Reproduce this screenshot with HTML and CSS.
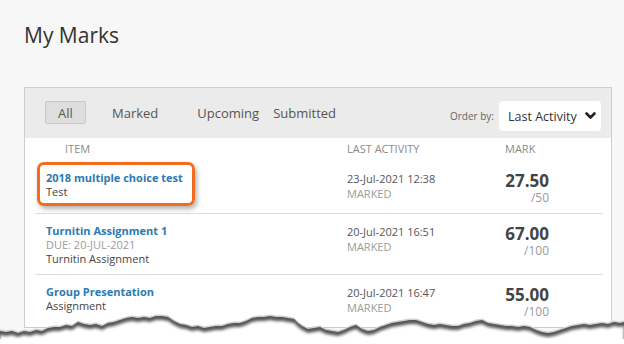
FILE: index.html
```html
<!DOCTYPE html>
<html>
<head>
    <title>My Marks</title>
    <meta name="viewport" content="width=device-width, initial-scale=1">
    <link rel="stylesheet" href="styles.css">
</head>
<body>
    <div class="page">
        <h1 class="title">My Marks</h1>

        <div class="card">
            <!-- Filter tabs + ordering -->
            <div class="toolbar">
                <div class="tabs">
                    <button class="tab active">All</button>
                    <button class="tab tab-marked">Marked</button>
                    <button class="tab tab-upcoming">Upcoming</button>
                    <button class="tab tab-submitted">Submitted</button>
                </div>
                <div class="order">
                    <span class="order-label">Order by:</span>
                    <div class="select">
                        <span>Last Activity</span>
                        <svg class="chevron" width="11" height="8" viewBox="0 0 11 8">
                            <polyline points="1.5,1.5 5.5,5.5 9.5,1.5" fill="none" stroke="#222" stroke-width="2.6" stroke-linecap="round" stroke-linejoin="round"/>
                        </svg>
                    </div>
                </div>
            </div>

            <div class="rows">
                <div class="grid cols">
                    <div class="col-item">Item</div>
                    <div>Last Activity</div>
                    <div class="col-mark">Mark</div>
                </div>

                <div class="grid row first">
                    <div class="item">
                        <a class="item-title" href="#">2018 multiple choice test</a>
                        <div class="item-type">Test</div>
                        <span class="callout"></span>
                    </div>
                    <div class="activity">
                        <div class="date">23-Jul-2021 12:38</div>
                        <div class="status">MARKED</div>
                    </div>
                    <div class="mark">
                        <div class="score">27.50</div>
                        <div class="out-of">/50</div>
                    </div>
                </div>

                <div class="grid row">
                    <div class="item">
                        <a class="item-title" href="#">Turnitin Assignment 1</a>
                        <div class="item-due">DUE: 20-JUL-2021</div>
                        <div class="item-type">Turnitin Assignment</div>
                    </div>
                    <div class="activity">
                        <div class="date">20-Jul-2021 16:51</div>
                        <div class="status">MARKED</div>
                    </div>
                    <div class="mark">
                        <div class="score">67.00</div>
                        <div class="out-of">/100</div>
                    </div>
                </div>

                <div class="grid row">
                    <div class="item">
                        <a class="item-title" href="#">Group Presentation</a>
                        <div class="item-type">Assignment</div>
                    </div>
                    <div class="activity">
                        <div class="date">20-Jul-2021 16:47</div>
                        <div class="status">MARKED</div>
                    </div>
                    <div class="mark">
                        <div class="score">55.00</div>
                        <div class="out-of">/100</div>
                    </div>
                </div>
            </div>
        </div>
    </div>

    <!-- torn paper edge over the bottom of the shot -->
    <svg class="torn" width="624" height="30" viewBox="0 314 624 30">
        <defs>
            <filter id="soft" x="-5%" y="-50%" width="110%" height="200%">
                <feGaussianBlur stdDeviation="1.6"/>
            </filter>
            <path id="edge" d="M0,344 L0,331 6,332 12,331 18,333 24,331 30,332 36,330 42,331 48,328 54,327 60,327 66,325 72,326 78,322 84,324 90,325 96,324 102,326 108,323 114,322 120,320 126,318 132,317 138,318 144,317 150,318 156,316 162,316 168,317 174,321 180,324 186,325 192,327 198,326 204,328 210,327 216,326 222,326 228,324 234,323 240,323 246,321 252,318 258,317 264,317 270,316 276,317 282,317 288,318 294,319 298,323 302,326 308,329 314,328 320,327 326,330 332,331 338,332 344,330 350,327 356,325 362,329 368,331 374,330 380,327 386,325 392,323 398,322 404,321 410,320 416,320 422,322 428,324 434,325 440,324 446,325 452,326 458,326 464,324 470,323 476,321 482,320 488,323 494,324 500,325 506,326 512,326 518,327 524,326 530,327 536,330 542,332 548,333 554,332 560,330 566,328 572,326 578,325 584,324 590,325 596,324 602,323 608,324 614,322 620,323 624,322 L624,344 Z"/>
        </defs>
        <use href="#edge" fill="#cfcfcf" transform="translate(0,-1.5)"/>
        <use href="#edge" fill="#555"/>
        <use href="#edge" fill="#fff" transform="translate(0,4)" filter="url(#soft)"/>
        <rect x="0" y="339" width="624" height="5" fill="#fff"/>
    </svg>
</body>
</html>
```

FILE: styles.css
```css
* { margin: 0; padding: 0; box-sizing: border-box; }
body { font: 12px "Open Sans", sans-serif; background: #f7f7f7; color: #333; height: 344px; overflow: hidden; position: relative; }
.page { padding: 21px 12px 0 24px; }
.title { font-size: 21px; font-weight: 400; line-height: 28px; color: #333; }

.card { margin-top: 38px; background: #fff; border: 1px solid #cdcdcd; }
.toolbar { display: flex; justify-content: space-between; align-items: flex-start; height: 50px; padding: 13px 10px 0 20px; background: #ebebeb; }
.tabs { display: flex; align-items: center; height: 23px; }
.tab { font: 13px "Open Sans", sans-serif; color: #555; background: none; border: 0; }
.tab.active { width: 41px; height: 23px; background: #dedede; border: 1px solid #c9c9c9; border-radius: 2px; }
.tab-marked { margin-left: 26px; }
.tab-upcoming { margin-left: 39px; }
.tab-submitted { margin-left: 14px; }
.order { display: flex; align-items: center; gap: 5px; }
.order-label { font-size: 10px; color: #666; }
.select { display: flex; align-items: center; justify-content: space-between; width: 102px; height: 30px; padding: 0 5px 0 9px; background: #fff; border-radius: 4px; font-size: 12.5px; color: #333; }

.rows { margin: 0 8px 0 10px; }
.grid { display: grid; grid-template-columns: 312px 148px 54px; }
.cols { padding: 4px 0 5px; font-size: 11px; line-height: 14px; color: #8a8a8a; text-transform: uppercase; }
.col-item { padding-left: 30px; }
.col-mark { padding-left: 10px; }

.row { padding: 10px 0 8px; border-top: 1px solid #dcdcdc; }
.row.first { border-top: 0; }
.item { position: relative; padding-left: 11px; font-size: 11px; line-height: 14px; }
.item-title { display: block; font-weight: 700; color: #2a7ab3; text-decoration: none; }
.item-type { color: #444; }
.item-due { color: #9a9a9a; }
.activity { font-size: 11px; line-height: 15px; }
.date { color: #555; }
.status { color: #9b9b9b; }
.mark { text-align: right; }
.score { font-size: 17px; font-weight: 700; line-height: 20px; color: #444; }
.out-of { font-size: 12px; line-height: 14px; color: #999; }

.callout { position: absolute; left: 2px; top: -9px; width: 158px; height: 44px; border: 3px solid #f26c1f; border-radius: 7px; box-shadow: 2px 3px 5px rgba(0, 0, 0, .3); }
.torn { position: absolute; left: 0; bottom: 0; }
```
